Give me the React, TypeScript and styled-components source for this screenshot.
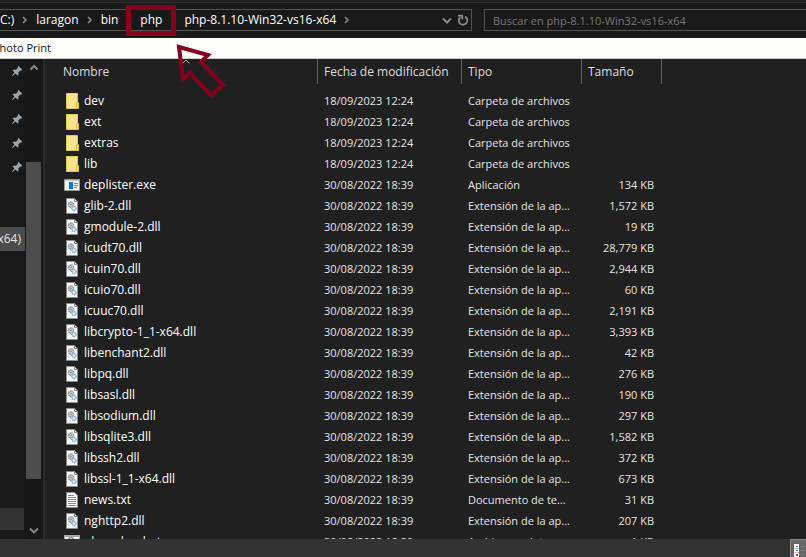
import React from "react";
import styled, { createGlobalStyle } from "styled-components";

const GlobalStyle = createGlobalStyle`
  * { box-sizing: border-box; }
  body {
    margin: 0;
    overflow: hidden;
    background: #202020;
    color: #e4e4e4;
    font: 12px/20px "Open Sans", "Noto Sans", sans-serif;
  }
  button, input { font: inherit; color: inherit; }
`;

const Window = styled.div`
  height: 100vh;
  display: flex;
  flex-direction: column;
  position: relative;
`;

const AddressBar = styled.header`
  flex: none;
  height: 38px;
  padding-top: 9px;
  display: flex;
  gap: 12px;
  background: #191919;
  box-shadow: inset 0 2px #202020, inset 0 3px #303030;
`;

const PathBox = styled.nav`
  flex: none;
  width: 472px;
  height: 22px;
  display: flex;
  align-items: center;
  border: 1px solid #535353;
  border-left: 0;
`;

const Crumb = styled.button`
  flex: none;
  height: 20px;
  padding: 0;
  border: 0;
  background: none;
  color: #fff;
`;

const CrumbGap = styled.span<{ $dim?: boolean }>`
  flex: none;
  width: 22px;
  display: flex;
  justify-content: center;
  color: ${(p) => (p.$dim ? "#444" : "#8a8a8a")};
`;

const BoxTools = styled.div`
  margin-left: auto;
  display: flex;
`;

const ToolButton = styled.button`
  width: 16px;
  height: 20px;
  padding: 0;
  display: grid;
  place-items: center;
  border: 0;
  background: none;
  color: #8a8a8a;
`;

const SearchInput = styled.input`
  flex: 1;
  min-width: 0;
  height: 22px;
  padding: 0 8px;
  border: 1px solid #535353;
  border-right: 0;
  background: #191919;
  font-size: 11px;
  &::placeholder { color: #777; opacity: 1; }
`;

const PrintBar = styled.div`
  flex: none;
  height: 21px;
  background: #fffffb;
  border-bottom: 1px solid #d0d0d0;
  color: #111;
  font-size: 11px;
`;

const Clipped = styled.span<{ $shift: number }>`
  display: block;
  margin-left: -${(p) => p.$shift}px;
  white-space: nowrap;
`;

const Main = styled.main`
  flex: 1;
  min-height: 0;
  display: flex;
  overflow: hidden;
`;

const Sidebar = styled.aside`
  flex: none;
  width: 25px;
  display: flex;
  flex-direction: column;
  overflow: hidden;
  background: #191919;
`;

const PinRow = styled.button`
  flex: none;
  height: 24px;
  padding: 0 0 0 11px;
  display: flex;
  align-items: center;
  border: 0;
  background: none;
`;

const SelectedRow = styled.button`
  flex: none;
  height: 24px;
  margin-top: 48px;
  padding: 0 4px 0 0;
  display: flex;
  align-items: center;
  justify-content: flex-end;
  border: 0;
  background: #4c4c4c;
`;

const HoverBlock = styled.div`
  height: 22px;
  margin: auto 1px 9px 0;
  background: #333;
`;

const ScrollBar = styled.div`
  flex: none;
  width: 18px;
  padding: 0 2px 0 1px;
  display: flex;
  flex-direction: column;
  background: #171717;
`;

const ScrollButton = styled.button`
  flex: none;
  height: 17px;
  padding: 0;
  display: grid;
  place-items: center;
  border: 0;
  background: none;
  color: #858585;
`;

const ScrollTrack = styled.div`
  flex: 1;
  padding: 86px 0 43px;
`;

const ScrollThumb = styled.div`
  height: 100%;
  background: #4d4d4d;
`;

const Content = styled.section`
  flex: 1;
  min-width: 0;
  overflow: hidden;
  border-left: 2px solid #2b2b2b;
`;

const Table = styled.table`
  table-layout: fixed;
  width: 617px;
  border-collapse: separate;
  border-spacing: 0;
  white-space: nowrap;
`;

const Col = styled.col<{ $w: number }>`
  width: ${(p) => p.$w}px;
`;

const HeadCell = styled.th<{ $indent?: boolean }>`
  position: relative;
  height: 25px;
  padding: 0 0 0 ${(p) => (p.$indent ? 18 : 6)}px;
  border-right: 1px solid #636363;
  text-align: left;
  font-weight: 400;
  color: #dedede;
`;

const SortMark = styled.svg`
  position: absolute;
  top: 0;
  left: 50%;
`;

const Spacer = styled.tbody`
  td { height: 6px; padding: 0; }
`;

const Cell = styled.td<{ $right?: boolean }>`
  height: 21px;
  padding: 0 8px 0 6px;
  font-size: 11px;
  text-align: ${(p) => (p.$right ? "right" : "left")};
`;

const NameBox = styled.div`
  display: flex;
  align-items: center;
  gap: 4px;
  padding-left: 13px;
  font-size: 12px;
  color: #fff;
`;

const StatusBar = styled.footer`
  flex: none;
  height: 18px;
  display: flex;
  justify-content: flex-end;
  background: #333;
`;

const ViewButton = styled.button`
  width: 16px;
  height: 18px;
  padding: 0;
  display: flex;
  border: 1px solid #8c8c8c;
  border-width: 1px 0 0 1px;
  background: #666;
  overflow: hidden;
`;

const Annotation = styled.svg`
  position: absolute;
  top: 0;
  left: 120px;
  pointer-events: none;
`;

const Chevron = () => (
  <svg width="6" height="8" viewBox="0 0 6 8" fill="none" stroke="currentColor" strokeWidth="1.6">
    <path d="M1 1l3 3-3 3" />
  </svg>
);

const Arrow = ({ up }: { up?: boolean }) => (
  <svg width="10" height="7" viewBox="0 0 10 7" fill="none" stroke="currentColor" strokeWidth="2">
    <path d={up ? "M1.5 5.5L5 2l3.5 3.5" : "M1 1.5l4 4 4-4"} />
  </svg>
);

const Refresh = () => (
  <svg width="12" height="12" viewBox="0 0 12 12" fill="none" stroke="currentColor" strokeWidth="1.8">
    <path d="M8 2.600A4.300 4.300 0 1 1 3.200 3.200M1 1.600h4.200v4" />
  </svg>
);

const Pin = () => (
  <svg width="12" height="12" viewBox="0 0 12 12">
    <path d="M7.500 1l3.800 3.800-1 .9-1.100-.2-1.800 2 .1 2.300-1 .8-2.100-2.100L1 11.200.800 11 3.400 7.500 1.700 5.500l.9-.9 2.300.2 1.800-1.900L6.600 1.700z" fill="#98a6b2" />
  </svg>
);

type Kind = "folder" | "exe" | "dll" | "txt" | "bat";

const Page = () => (
  <path d="M2.500.500h8l3 3v12h-11z" fill="#f7f7f7" stroke="#8e8e8e" />
);

const FileIcon = ({ kind }: { kind: Kind }) => (
  <svg width="16" height="16" viewBox="0 0 16 16">
    {kind === "folder" && (
      <>
        <path d="M2.500.500h11v15h-11z" fill="#fbe48d" stroke="#e6c84a" />
        <path d="M12.500 9.500h2v6h-2z" fill="#fbe48d" stroke="#e0bd35" />
      </>
    )}
    {kind === "exe" && (
      <>
        <path d="M.500 2.500h15v11H.500z" fill="#f4f4f4" stroke="#9a9a9a" />
        <path d="M1 3h14v1H1z" fill="#c4c8cc" />
        <path d="M5 5h4v7H5z" fill="#0a74e8" />
        <path d="M10 6.500h4M10 8.500h4M10 10.500h3" stroke="#888" />
      </>
    )}
    {kind === "dll" && (
      <>
        <Page />
        <path d="M10.500.500v3h3" fill="none" stroke="#8e8e8e" />
        <circle cx="7" cy="6.500" r="2.500" fill="#d8dadc" stroke="#858b90" strokeWidth="1.500" strokeDasharray="1.200 .5" />
        <circle cx="7" cy="6.500" r="1" fill="#8d9194" />
        <path d="M6 9l3 3" stroke="#858b90" />
        <circle cx="10" cy="10.500" r="2" fill="#e6f2fa" stroke="#79b0d4" strokeWidth="1.500" strokeDasharray="1.200 .5" />
      </>
    )}
    {kind === "txt" && (
      <>
        <Page />
        <path d="M4 3.500h6M4 5.500h8M4 7.500h8M4 9.500h8M4 11.500h8M4 13.500h8" stroke="#8c8c8c" />
      </>
    )}
    {kind === "bat" && (
      <>
        <path d="M.500 1.500h15v13H.500z" fill="#f4f4f4" stroke="#a4a8ab" />
        <path d="M0 1h16v2H0z" fill="#a4a8ab" />
        <circle cx="7" cy="6" r="2.500" fill="none" stroke="#858b90" strokeWidth="1.500" />
      </>
    )}
  </svg>
);

const DetailsIcon = () => (
  <svg width="15" height="17" viewBox="0 0 15 17">
    <path d="M3 4h5v13H3z" fill="#fff" />
    <path d="M3 8.500h5M3 12.500h5" stroke="#c8c8c8" />
    <path d="M5 6h2v1H5z" fill="#3d8a5a" />
    <path d="M5 10h2v1H5z" fill="#2f86e0" />
    <path d="M5 14h2v2H5z" fill="#e8341c" />
    <path d="M10 6.500h4M10 10.500h4M10 14.500h4" stroke="#808080" />
  </svg>
);

const D1 = "18/09/2023 12:24";
const D2 = "30/08/2022 18:39";
const DLL = "Extensión de la ap...";

const files: [Kind, string, string, string, string][] = [
  ["folder", "dev", D1, "Carpeta de archivos", ""],
  ["folder", "ext", D1, "Carpeta de archivos", ""],
  ["folder", "extras", D1, "Carpeta de archivos", ""],
  ["folder", "lib", D1, "Carpeta de archivos", ""],
  ["exe", "deplister.exe", D2, "Aplicación", "134 KB"],
  ["dll", "glib-2.dll", D2, DLL, "1,572 KB"],
  ["dll", "gmodule-2.dll", D2, DLL, "19 KB"],
  ["dll", "icudt70.dll", D2, DLL, "28,779 KB"],
  ["dll", "icuin70.dll", D2, DLL, "2,944 KB"],
  ["dll", "icuio70.dll", D2, DLL, "60 KB"],
  ["dll", "icuuc70.dll", D2, DLL, "2,191 KB"],
  ["dll", "libcrypto-1_1-x64.dll", D2, DLL, "3,393 KB"],
  ["dll", "libenchant2.dll", D2, DLL, "42 KB"],
  ["dll", "libpq.dll", D2, DLL, "276 KB"],
  ["dll", "libsasl.dll", D2, DLL, "190 KB"],
  ["dll", "libsodium.dll", D2, DLL, "297 KB"],
  ["dll", "libsqlite3.dll", D2, DLL, "1,582 KB"],
  ["dll", "libssh2.dll", D2, DLL, "372 KB"],
  ["dll", "libssl-1_1-x64.dll", D2, DLL, "673 KB"],
  ["txt", "news.txt", D2, "Documento de te...", "31 KB"],
  ["dll", "nghttp2.dll", D2, DLL, "207 KB"],
  ["bat", "phar.phar.bat", D2, "Archivo por lotes ...", "1 KB"],
];

export default function App() {
  return (
    <Window>
      <GlobalStyle />
      <AddressBar>
        <PathBox aria-label="Ruta">
          <Crumb>C:)</Crumb>
          <CrumbGap><Chevron /></CrumbGap>
          <Crumb>laragon</Crumb>
          <CrumbGap><Chevron /></CrumbGap>
          <Crumb>bin</Crumb>
          <CrumbGap $dim><Chevron /></CrumbGap>
          <Crumb>php</Crumb>
          <CrumbGap $dim><Chevron /></CrumbGap>
          <Crumb>php-8.1.10-Win32-vs16-x64</Crumb>
          <CrumbGap><Chevron /></CrumbGap>
          <BoxTools>
            <ToolButton aria-label="Ubicaciones anteriores"><Arrow /></ToolButton>
            <ToolButton aria-label="Actualizar"><Refresh /></ToolButton>
          </BoxTools>
        </PathBox>
        <SearchInput type="search" aria-label="Buscar" placeholder="Buscar en php-8.1.10-Win32-vs16-x64" />
      </AddressBar>
      <PrintBar><Clipped $shift={7}>Photo Print</Clipped></PrintBar>
      <Main>
        <Sidebar>
          {[0, 1, 2, 3, 4].map((i) => (
            <PinRow key={i} aria-label="Anclado"><Pin /></PinRow>
          ))}
          <SelectedRow>x64)</SelectedRow>
          <HoverBlock />
        </Sidebar>
        <ScrollBar>
          <ScrollButton aria-label="Subir"><Arrow up /></ScrollButton>
          <ScrollTrack><ScrollThumb /></ScrollTrack>
          <ScrollButton aria-label="Bajar"><Arrow /></ScrollButton>
        </ScrollBar>
        <Content>
          <Table>
            <colgroup><Col $w={273} /><Col $w={144} /><Col $w={120} /><Col $w={80} /></colgroup>
            <thead>
              <tr>
                <HeadCell $indent>
                  Nombre
                  <SortMark width="10" height="6" fill="none" stroke="#aaa"><path d="M1.500 4.500L5 1l3.500 3.500" /></SortMark>
                </HeadCell>
                <HeadCell>Fecha de modificación</HeadCell>
                <HeadCell>Tipo</HeadCell>
                <HeadCell>Tamaño</HeadCell>
              </tr>
            </thead>
            <Spacer><tr><td colSpan={4} /></tr></Spacer>
            <tbody>
              {files.map(([kind, name, date, type, size]) => (
                <tr key={name}>
                  <Cell><NameBox><FileIcon kind={kind} />{name}</NameBox></Cell>
                  <Cell>{date}</Cell>
                  <Cell>{type}</Cell>
                  <Cell $right>{size}</Cell>
                </tr>
              ))}
            </tbody>
          </Table>
        </Content>
      </Main>
      <StatusBar>
        <ViewButton aria-label="Detalles"><DetailsIcon /></ViewButton>
      </StatusBar>
      <Annotation width="120" height="100" fill="none" stroke="#86001e">
        <path d="M8.500 7.500h45v26h-45z" strokeWidth="5" />
        <path d="M59 47l29 8-7 7 22 23-12 10-21-22-7 6z" strokeWidth="4" />
      </Annotation>
    </Window>
  );
}
